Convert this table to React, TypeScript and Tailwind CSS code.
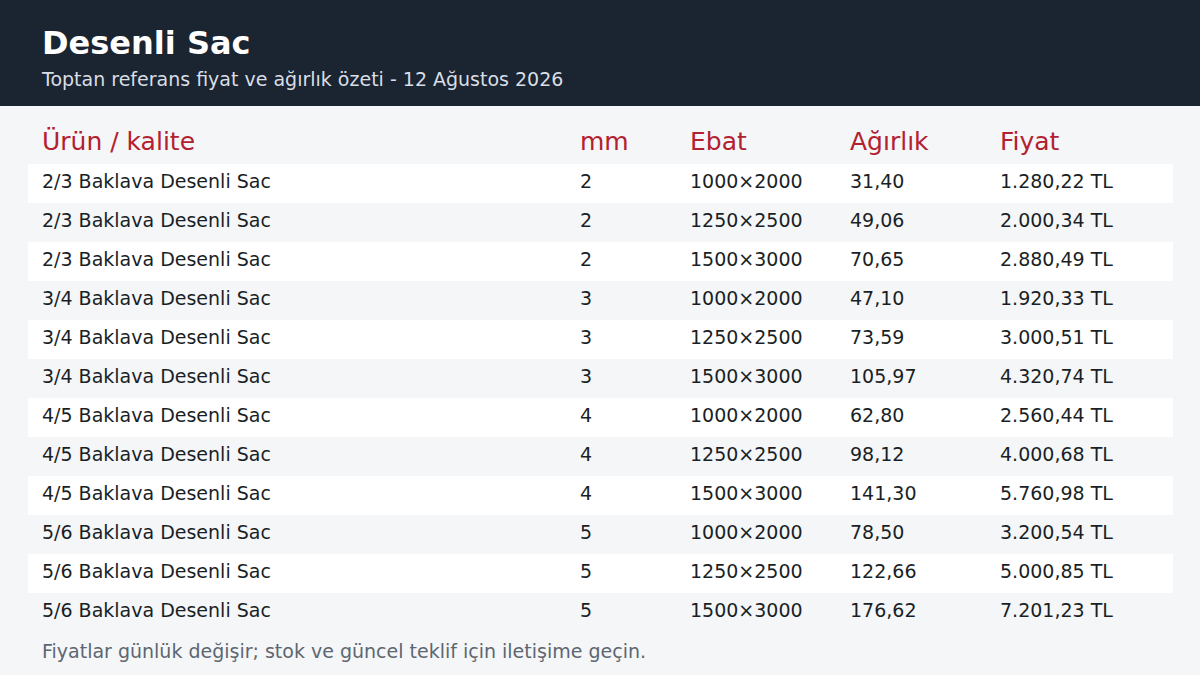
const rows = [
  ["2/3 Baklava Desenli Sac", "2", "1000×2000", "31,40", "1.280,22 TL"],
  ["2/3 Baklava Desenli Sac", "2", "1250×2500", "49,06", "2.000,34 TL"],
  ["2/3 Baklava Desenli Sac", "2", "1500×3000", "70,65", "2.880,49 TL"],
  ["3/4 Baklava Desenli Sac", "3", "1000×2000", "47,10", "1.920,33 TL"],
  ["3/4 Baklava Desenli Sac", "3", "1250×2500", "73,59", "3.000,51 TL"],
  ["3/4 Baklava Desenli Sac", "3", "1500×3000", "105,97", "4.320,74 TL"],
  ["4/5 Baklava Desenli Sac", "4", "1000×2000", "62,80", "2.560,44 TL"],
  ["4/5 Baklava Desenli Sac", "4", "1250×2500", "98,12", "4.000,68 TL"],
  ["4/5 Baklava Desenli Sac", "4", "1500×3000", "141,30", "5.760,98 TL"],
  ["5/6 Baklava Desenli Sac", "5", "1000×2000", "78,50", "3.200,54 TL"],
  ["5/6 Baklava Desenli Sac", "5", "1250×2500", "122,66", "5.000,85 TL"],
  ["5/6 Baklava Desenli Sac", "5", "1500×3000", "176,62", "7.201,23 TL"],
];

const cols = "grid grid-cols-[538px_110px_160px_150px_1fr]";

export default function App() {
  return (
    <div className="w-[1200px] h-[675px] bg-[#f4f6f8] overflow-hidden font-['DejaVu_Sans',sans-serif]">
      {/* Header */}
      <div className="h-[106px] bg-[#1b2431] px-[42px] pt-[23px]">
        <h1 className="text-[32px] leading-[40px] font-bold text-white">Desenli Sac</h1>
        <p className="text-[19px] leading-[30px] text-[#d9dee5] mt-[1px]">
          Toptan referans fiyat ve ağırlık özeti - 12 Ağustos 2026
        </p>
      </div>

      {/* Table */}
      <div className="ml-[28px] mr-[27px] mt-[16px]">
        <div className={`${cols} h-[42px] items-center text-[25px] text-[#b3202f] pb-[2px]`}>
          <div className="pl-[14px]">Ürün / kalite</div>
          <div className="pl-[14px]">mm</div>
          <div className="pl-[14px]">Ebat</div>
          <div className="pl-[14px]">Ağırlık</div>
          <div className="pl-[14px]">Fiyat</div>
        </div>
        {rows.map((r, i) => (
          <div
            key={i}
            className={`${cols} h-[39px] items-center pb-[5px] text-[19px] text-[#1a1f26] ${i % 2 === 0 ? "bg-white" : "bg-[#f4f6f8]"}`}
          >
            {r.map((c, j) => (
              <div key={j} className="pl-[14px] whitespace-nowrap">{c}</div>
            ))}
          </div>
        ))}
      </div>

      {/* Footer note */}
      <p className="px-[42px] mt-[7px] text-[19px] leading-[24px] text-[#5d6671]">
        Fiyatlar günlük değişir; stok ve güncel teklif için iletişime geçin.
      </p>
    </div>
  );
}
